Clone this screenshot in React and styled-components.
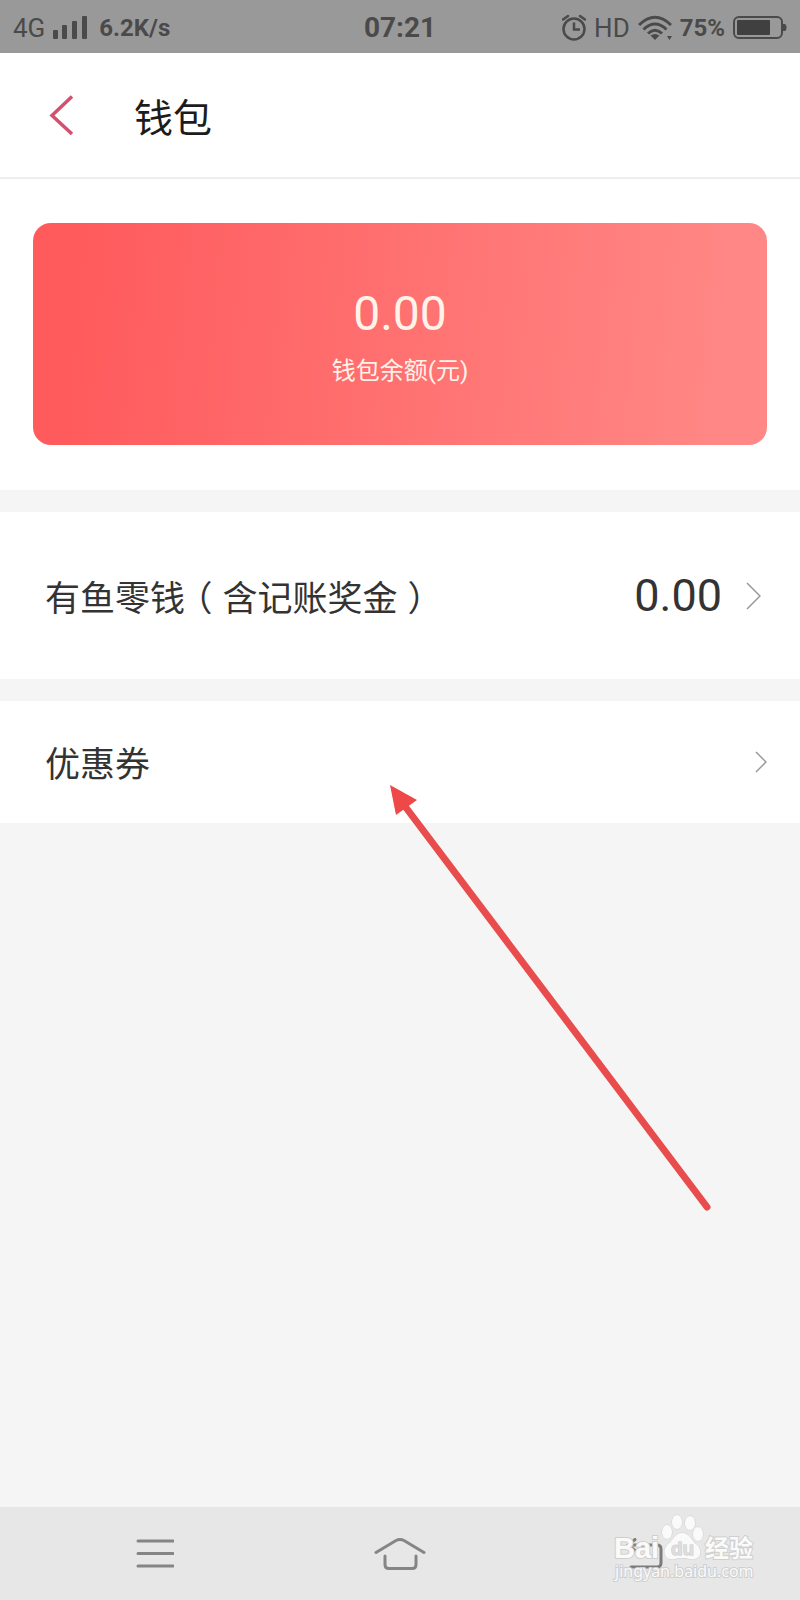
import React from 'react';
import styled, { createGlobalStyle } from 'styled-components';

const GlobalStyle = createGlobalStyle`
  * {
    box-sizing: border-box;
  }

  body {
    margin: 0;
    background: #f5f5f5;
    font-family: Roboto, 'Noto Sans CJK SC', sans-serif;
    color: #333;
  }
`;

const Page = styled.div`
  position: relative;
  display: flex;
  flex-direction: column;
  min-height: 100vh;
  overflow: hidden;
`;

const StatusBar = styled.div`
  display: grid;
  grid-template-columns: 1fr auto 1fr;
  align-items: center;
  height: 53px;
  padding: 2px 13px 0;
  background: #999;
  color: #4a4a4a;
  line-height: 32px;
`;

const StatusGroup = styled.div`
  display: flex;
  align-items: center;
  justify-content: ${props => props.$end ? 'flex-end' : 'flex-start'};
  gap: 8px;
`;

const StatusText = styled.span`
  font-size: 24px;
  font-weight: 700;
`;

const NetworkType = styled.span`
  font-size: 26px;
`;

const Clock = styled.time`
  font-size: 28px;
  font-weight: 700;
`;

const Header = styled.header`
  display: flex;
  align-items: center;
  gap: 60px;
  padding: 32px 49px;
  background: #fff;
  border-bottom: 2px solid #eee;
`;

const BackButton = styled.button`
  display: flex;
  padding: 0;
  border: 0;
  background: none;
  cursor: pointer;
`;

const Title = styled.h1`
  margin: 0;
  color: #1c1c1c;
  font-family: 'Noto Sans CJK SC', sans-serif;
  font-size: 39px;
  font-weight: 400;
  line-height: 60px;
`;

const BalanceSection = styled.section`
  padding: 44px 33px 45px;
  background: #fff;
`;

const BalanceCard = styled.div`
  display: flex;
  flex-direction: column;
  align-items: center;
  gap: 12px;
  padding: 61px 0 59px;
  border-radius: 18px;
  background: linear-gradient(95deg, #ff5a5c 5%, #ff8886 95%);
  color: #fff3ea;
`;

const Balance = styled.strong`
  font-size: 48px;
  font-weight: 400;
  line-height: 60px;
`;

const BalanceLabel = styled.span`
  font-size: 24px;
  line-height: 30px;
`;

const Row = styled.a`
  display: flex;
  align-items: center;
  justify-content: space-between;
  margin-top: 22px;
  padding: ${props => props.$tall ? '54px 39px 53px 45px' : '31px 33px 31px 45px'};
  background: #fff;
  color: #333;
  text-decoration: none;
`;

const RowLabel = styled.span`
  font-family: 'Noto Sans CJK SC', sans-serif;
  font-size: 35px;
  line-height: 60px;
`;

// half-width bracket centred in a full-width cell
const Bracket = styled.span`
  padding: 0 10px;
  font-feature-settings: 'halt';
`;

const RowValue = styled.span`
  display: flex;
  align-items: center;
  gap: 24px;
  font-size: 45px;
  line-height: 60px;
`;

const NavBar = styled.nav`
  display: grid;
  grid-template-columns: repeat(3, 1fr);
  align-items: center;
  height: 93px;
  margin-top: auto;
  padding: 0 33px;
  background: #e7e7e7;
`;

const NavButton = styled.button`
  display: flex;
  justify-content: center;
  padding: 0;
  border: 0;
  background: none;
  cursor: pointer;
`;

const PointerArrow = styled.svg`
  position: absolute;
  top: 780px;
  left: 384px;
  pointer-events: none;
`;

const Watermark = styled.svg`
  position: absolute;
  right: 40px;
  bottom: 12px;
  pointer-events: none;
`;

const SignalIcon = () => (
  <svg width="38" height="24" viewBox="0 0 38 24" fill="#4a4a4a">
    <rect x="0" y="14" width="5" height="9" rx="1" />
    <rect x="9" y="9" width="5" height="14" rx="1" />
    <rect x="19" y="5" width="5" height="18" rx="1" />
    <rect x="29" y="0" width="5" height="23" rx="1" />
  </svg>
);

const AlarmIcon = () => (
  <svg width="24" height="28" viewBox="0 0 24 28" fill="none" stroke="#4a4a4a" strokeWidth="2.5">
    <circle cx="12" cy="15" r="10.5" />
    <path d="M12 8.5v7h6" />
    <path d="M1 5.5l5-3.5M23 5.5l-5-3.5" strokeLinecap="round" />
  </svg>
);

const WifiIcon = () => (
  <svg width="34" height="26" viewBox="0 0 34 26" fill="none" stroke="#4a4a4a" strokeWidth="3">
    <path d="M1 10Q17 -5.500 33 10" />
    <path d="M5.500 14.500Q17 3.500 28.500 14.500" />
    <path d="M10 18.500Q17 12 24 18.500" />
    <path d="M12.500 20.500Q17 17.500 21.500 20.500L17 25z" fill="#4a4a4a" stroke="none" />
    <path d="M29 21h5l-2.500 4z" fill="#4a4a4a" stroke="none" />
  </svg>
);

const BatteryIcon = () => (
  <svg width="54" height="24" viewBox="0 0 54 24" fill="none">
    <rect x="1" y="1" width="48" height="21" rx="5" stroke="#4a4a4a" strokeWidth="2" />
    <rect x="4" y="4" width="33" height="15" rx="1" fill="#404040" />
    <path d="M50 8h1.500q2 0 2 3.500t-2 3.500H50z" fill="#4a4a4a" />
  </svg>
);

const BackIcon = () => (
  <svg width="25" height="40" viewBox="0 0 25 40" fill="none">
    <path d="M23 1.500L3 20.500l20 18.500" stroke="#d4506e" strokeWidth="3.500" />
  </svg>
);

const Chevron = ({ size }) => (
  <svg width={size / 2 + 2} height={size + 2} viewBox={`0 0 ${size / 2 + 2} ${size + 2}`} fill="none">
    <path d={`M1 1l${size / 2} ${size / 2}l${-size / 2} ${size / 2}`} stroke="#999" strokeWidth="1.500" />
  </svg>
);

const MenuIcon = () => (
  <svg width="38" height="30" viewBox="0 0 38 30" stroke="#858585" strokeWidth="3" strokeLinecap="round">
    <path d="M2 2h35M2 14.500h35M2 27h35" />
  </svg>
);

const HomeIcon = () => (
  <svg width="52" height="34" viewBox="0 0 52 34" fill="none" stroke="#858585" strokeWidth="3" strokeLinecap="round">
    <path d="M2 15.500L22 3.500Q26 1.500 30 3.500L50 15.500" />
    <path d="M11 19v8.500q0 4 4 4h23q4 0 4-4V19" />
  </svg>
);

const ReturnIcon = () => (
  <svg width="38" height="32" viewBox="0 0 38 32" fill="none" stroke="#7c7c7c" strokeWidth="3" strokeLinecap="round">
    <path d="M9 1.500L2 7l7 5.500" />
    <path d="M3 7h28q4 0 4 4v14q0 4-4 4H5" />
  </svg>
);

const App = () => (
  <>
    <GlobalStyle />
    <Page>
      <StatusBar>
        <StatusGroup>
          <NetworkType>4G</NetworkType>
          <SignalIcon />
          <StatusText>6.2K/s</StatusText>
        </StatusGroup>
        <Clock>07:21</Clock>
        <StatusGroup $end>
          <AlarmIcon />
          <NetworkType>HD</NetworkType>
          <WifiIcon />
          <StatusText>75%</StatusText>
          <BatteryIcon />
        </StatusGroup>
      </StatusBar>

      <Header>
        <BackButton type="button" aria-label="返回">
          <BackIcon />
        </BackButton>
        <Title>钱包</Title>
      </Header>

      <main>
        <BalanceSection>
          <BalanceCard>
            <Balance>0.00</Balance>
            <BalanceLabel>钱包余额(元)</BalanceLabel>
          </BalanceCard>
        </BalanceSection>

        <Row href="#change" $tall>
          <RowLabel>
            有鱼零钱<Bracket>（</Bracket>含记账奖金<Bracket>）</Bracket>
          </RowLabel>
          <RowValue>
            0.00
            <Chevron size={26} />
          </RowValue>
        </Row>

        <Row href="#coupons">
          <RowLabel>优惠券</RowLabel>
          <Chevron size={20} />
        </Row>
      </main>

      <NavBar>
        <NavButton type="button" aria-label="菜单">
          <MenuIcon />
        </NavButton>
        <NavButton type="button" aria-label="主页">
          <HomeIcon />
        </NavButton>
        <NavButton type="button" aria-label="返回上一页">
          <ReturnIcon />
        </NavButton>
      </NavBar>

      <PointerArrow width="330" height="434" viewBox="0 0 330 434">
        <path d="M20 25L323 427" stroke="#e84c4c" strokeWidth="7" strokeLinecap="round" />
        <path d="M6 5L33 20L12 35z" fill="#ee4848" />
      </PointerArrow>

      <Watermark width="150" height="76" viewBox="0 0 150 76" fill="#fafafa" stroke="#cfcfcf">
        <g fontFamily="'Liberation Sans', sans-serif" fontWeight="700" paintOrder="stroke" strokeWidth="2">
          <text x="4" y="46" fontSize="29">Bai</text>
          <ellipse cx="57" cy="20" rx="5" ry="7" strokeWidth="1" />
          <ellipse cx="67" cy="10" rx="5" ry="7" strokeWidth="1" />
          <ellipse cx="80" cy="11" rx="5" ry="7" strokeWidth="1" />
          <ellipse cx="88" cy="22" rx="5" ry="7" strokeWidth="1" />
          <path d="M72 21C80 21 81 28 86 32C95 40 89 49 80 47Q72 45 64 47C55 49 51 39 58 32C64 28 64 21 72 21z" strokeWidth="1" />
          <text x="61" y="43" fontSize="19" fill="#dedede" stroke="#c8c8c8" strokeWidth="1">du</text>
          <text x="95" y="45" fontSize="24" fontFamily="'Noto Sans CJK SC', sans-serif">经验</text>
        </g>
        <text x="5" y="65" fontSize="16" fontFamily="'Noto Sans', sans-serif" paintOrder="stroke" strokeWidth="2">jingyan.baidu.com</text>
      </Watermark>
    </Page>
  </>
);

export default App;
